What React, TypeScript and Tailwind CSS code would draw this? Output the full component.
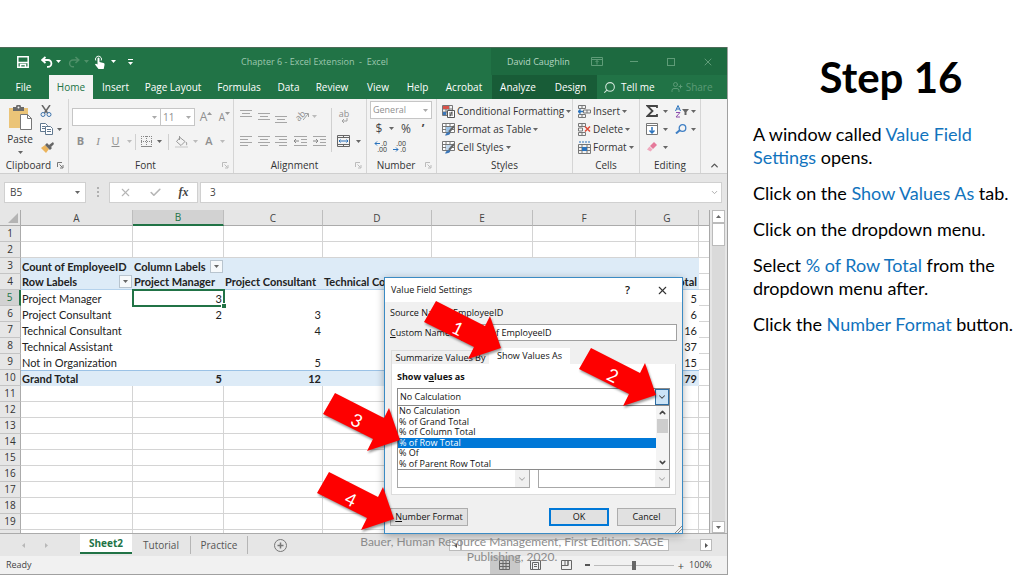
import React from "react";
import { Search, UserPlus, ChevronDown, ChevronUp, X, Check } from "lucide-react";

const tabs = [
  { label: "File", className: "w-[47px] text-white" },
  { label: "Home", className: "ml-[2px] w-[44px] bg-[#f3f3f3] text-[#217346]" },
  { label: "Insert", className: "w-[45px] text-white" },
  { label: "Page Layout", className: "w-[70px] text-white" },
  { label: "Formulas", className: "w-[62px] text-white" },
  { label: "Data", className: "w-[37px] text-white" },
  { label: "Review", className: "w-[50px] text-white" },
  { label: "View", className: "w-[42px] text-white" },
  { label: "Help", className: "w-[37px] text-white" },
  { label: "Acrobat", className: "w-[56px] text-white" },
  { label: "Analyze", className: "w-[52px] bg-[#185c37] text-white" },
  { label: "Design", className: "w-[53px] bg-[#185c37] text-white" },
];

const columns = ["A", "B", "C", "D", "E", "F", "G"];

const pivotRows: Record<number, string[]> = {
  3: ["Count of EmployeeID", "Column Labels", "", "", "", "", ""],
  4: [
    "Row Labels",
    "Project Manager",
    "Project Consultant",
    "Technical Consultant",
    "Technical Assistant",
    "Not in Organization",
    "Grand Total",
  ],
  5: ["Project Manager", "3", "", "", "", "", "5"],
  6: ["Project Consultant", "2", "3", "", "", "", "6"],
  7: ["Technical Consultant", "", "4", "", "", "", "16"],
  8: ["Technical Assistant", "", "", "", "", "", "37"],
  9: ["Not in Organization", "", "5", "", "", "", "15"],
  10: ["Grand Total", "5", "12", "", "", "", "79"],
};

const calculations = [
  "No Calculation",
  "% of Grand Total",
  "% of Column Total",
  "% of Row Total",
  "% Of",
  "% of Parent Row Total",
];

const Caret: React.FC<{ className?: string }> = ({ className = "text-[#666]" }) => (
  <svg className={`shrink-0 ${className}`} width="5" height="3" viewBox="0 0 5 3" aria-hidden="true">
    <path d="M0 0h5L2.500 3z" fill="currentColor" />
  </svg>
);

const Launcher: React.FC<{ className?: string }> = ({ className = "text-[#777]" }) => (
  <svg className={className} width="7" height="7" viewBox="0 0 7 7" fill="none" stroke="currentColor" aria-hidden="true">
    <path d="M.5 5V.5H5M2.500 2.500l3 3M6 3v3H3" />
  </svg>
);

const Group: React.FC<{ label: string; className: string; launcher?: string; children: React.ReactNode }> = ({
  label,
  className,
  launcher,
  children,
}) => (
  <section className={`flex shrink-0 flex-col pt-[2px] ${className}`}>
    <div className="flex-1">{children}</div>
    <div className="flex h-[15px] items-center text-[10px] text-[#333]">
      <span className="flex-1 text-center">{label}</span>
      {launcher && (
        <button aria-label={`${label} settings`} className="mr-[4px]">
          <Launcher className={launcher} />
        </button>
      )}
    </div>
  </section>
);

const Tool: React.FC<{ label: string; className: string; children: React.ReactNode }> = ({
  label,
  className,
  children,
}) => (
  <button aria-label={label} className={`flex shrink-0 items-center justify-center ${className}`}>
    {children}
  </button>
);

const Lines: React.FC<{ widths: number[]; align?: "left" | "center" | "right" }> = ({ widths, align = "center" }) => (
  <svg width="12" height="12" viewBox="0 0 12 12" stroke="#a6a6a6" aria-hidden="true">
    {widths.map((w, i) => {
      const x = align === "left" ? 0 : align === "right" ? 12 - w : (12 - w) / 2;
      return <path key={i} d={`M${x} ${i * 3 + 1.5}h${w}`} />;
    })}
  </svg>
);

const IndentIcon: React.FC<{ flip?: boolean }> = ({ flip }) => (
  <svg width="13" height="12" viewBox="0 0 13 12" fill="none" stroke="#a6a6a6" aria-hidden="true">
    <path d="M0 1.500h13M7 4.500h6M7 7.500h6M0 10.500h13" />
    <path d={flip ? "M0 6h5M3 4l2 2-2 2" : "M5 6H0M2 4L0 6l2 2"} stroke="#888" />
  </svg>
);

const GridIcon: React.FC<{ kind: "conditional" | "table" | "styles" | "insert" | "delete" | "format" }> = ({ kind }) => (
  <svg width="13" height="13" viewBox="0 0 13 13" fill="none" aria-hidden="true">
    {kind === "conditional" && (
      <>
        <path d="M.5.5h10v10H.5zM.5 4h10M.5 7h10M4 .5v10M7 .5v10" stroke="#777" />
        <path d="M1 1h6v3H1z" fill="#d9534a" />
        <path d="M1 7h3v3H1z" fill="#3b76b8" />
        <path d="M5.500 5.500h7v7h-7z" fill="#fff" stroke="#555" />
        <path d="M7 8h4M7 10h4M10 6.500l-2 5" stroke="#555" />
      </>
    )}
    {(kind === "table" || kind === "styles") && (
      <>
        <path d="M.5.5h12v9H.5zM.5 3.500h12M.5 6.500h12M4 .5v9M8 .5v9" fill="#fff" stroke="#777" />
        <path d="M4 4h5v5H4z" fill={kind === "table" ? "#9cc3e6" : "#c3d9ee"} />
        <path d="M12 3L7 9" stroke="#666" strokeWidth="2" />
        <path d="M3 12.500c1-3 3-4 5-3 1 2-2 3-5 3z" fill="#3b76b8" />
      </>
    )}
    {(kind === "insert" || kind === "delete") && (
      <>
        <path d="M.5.5h7v3h-7zM4 .5v3M.5 9.500h7v3h-7zM4 9.500v3" stroke="#777" />
        {kind === "insert" ? (
          <>
            <path d="M5.500 5h7v3h-7zM9 5v3" stroke="#777" />
            <path d="M5 6.500H0M2.500 4.500l-2 2 2 2" stroke="#2b73bd" strokeWidth="1.500" />
          </>
        ) : (
          <>
            <path d="M.5 5h4v3h-4z" stroke="#777" />
            <path d="M7 3.500l5 5M12 3.500l-5 5" stroke="#dd4b39" strokeWidth="1.500" />
          </>
        )}
      </>
    )}
    {kind === "format" && (
      <>
        <path d="M.5 3.500h12v9H.5zM.5 6.500h12M.5 9.500h12M4 3.500v9M9 3.500v9" stroke="#777" />
        <path d="M4 6h5v4H4z" fill="#2b73bd" />
        <path d="M1 1h11" stroke="#2b73bd" strokeDasharray="2 1" />
      </>
    )}
  </svg>
);

const TitleBar: React.FC = () => (
  <header className="flex h-[28px] shrink-0 items-center border-t border-[#4c6b58] bg-[#217346] text-[9px] text-[#9cc7ae]">
    <div className="flex flex-1 items-center pl-[17px] text-white">
      <button aria-label="Save" className="mr-[12px]">
        <svg width="12" height="12" viewBox="0 0 12 12" fill="none" stroke="currentColor" strokeWidth="1.500">
          <path d="M.8.8h10.400v10.400H.8zM.8 6.500h10.400M3.500 11V8.500h5V11" />
        </svg>
      </button>
      <button aria-label="Undo" className="mr-[3px]">
        <svg width="12" height="12" viewBox="0 0 12 12" fill="none" stroke="currentColor" strokeWidth="1.800">
          <path d="M4.500 1L1.200 4l3.300 3M1.500 4H7a3.300 3.300 0 010 6.800H6" />
        </svg>
      </button>
      <Caret className="mr-[7px] text-white" />
      <button aria-label="Redo" className="mr-[4px] text-[#4f9069]">
        <svg width="12" height="12" viewBox="0 0 12 12" fill="none" stroke="currentColor" strokeWidth="1.500">
          <path d="M7.500 1l3.300 3-3.300 3M10.500 4H5a3.300 3.300 0 000 6.800h1" />
        </svg>
      </button>
      <Caret className="mr-[5px] text-[#4f9069]" />
      <button aria-label="Touch mode" className="mr-[6px]">
        <svg width="11" height="14" viewBox="0 0 11 14" fill="currentColor">
          <path d="M3.500 3.500a1 1 0 012 0V7l4 1c1 .3 1.200 1 1 2l-.8 4H4.500L1 9.500c.5-1 1.500-.8 2.500 0z" />
          <path d="M1.800 5.500a3 3 0 115.400 0" fill="none" stroke="currentColor" />
        </svg>
      </button>
      <Caret className="mr-[12px] text-white" />
      <button aria-label="Customize toolbar" className="flex flex-col gap-[2px]">
        <span className="h-px w-[5px] bg-white" />
        <Caret className="text-white" />
      </button>
    </div>
    <h1 className="whitespace-nowrap">Chapter 6 - Excel Extension&nbsp; -&nbsp; Excel</h1>
    <div className="ml-[103px] flex h-full w-[236px] items-center bg-[#1d6a40] pl-[16px]">
      <span className="w-[84px] whitespace-nowrap text-[#b5d6c2]">David Caughlin</span>
      <button aria-label="Ribbon display" className="mr-[27px] text-[#5f9c78]">
        <svg width="12" height="9" viewBox="0 0 12 9" fill="none" stroke="currentColor">
          <path d="M.5.5h11v8H.5zM.5 2.500h11M6 7.500v-4M4.500 5L6 3.500 7.500 5" />
        </svg>
      </button>
      <button aria-label="Minimize" className="mr-[29px] h-px w-[8px] bg-[#5f9c78]" />
      <button aria-label="Maximize" className="mr-[27px] size-[8px] border border-[#5f9c78]" />
      <button aria-label="Close">
        <X size={12} strokeWidth={2} className="text-[#5f9c78]" />
      </button>
    </div>
  </header>
);

const TabRow: React.FC = () => (
  <nav className="flex h-[24px] shrink-0 bg-[#217346] text-[10px]">
    {tabs.map((tab) => (
      <button key={tab.label} className={`shrink-0 whitespace-nowrap text-center ${tab.className}`}>
        {tab.label}
      </button>
    ))}
    <button className="flex items-center gap-[5px] whitespace-nowrap pl-[6px] text-white">
      <Search size={13} strokeWidth={2} className="-scale-x-100 text-[#cfe5d8]" />
      Tell me
    </button>
    <button className="flex items-center gap-[3px] pl-[16px] text-[#5c9b76]">
      <UserPlus size={12} strokeWidth={2} />
      Share
    </button>
  </nav>
);

const ClipboardGroup: React.FC = () => (
  <Group label="Clipboard" launcher="text-[#777]" className="w-[69px] border-r border-[#d5d5d5]">
    <div className="flex">
      <button className="flex w-[40px] flex-col items-center pt-[4px] text-[10px] leading-[14px] text-[#333]">
        <svg width="24" height="25" viewBox="0 0 24 25" fill="none" aria-hidden="true">
          <path d="M1 3h19v20H1z" fill="#ebc478" />
          <path d="M5 2h3a2.500 2.500 0 015 0h3v4H5z" fill="#6a6a6a" />
          <circle cx="10.500" cy="2.500" r="1" fill="#f3f3f3" />
          <path d="M12.500 9.500h7l4 4v11h-11z" fill="#fff" stroke="#777" />
          <path d="M19.500 9.500v4h4" stroke="#777" />
        </svg>
        <span className="pt-[2px]">Paste</span>
        <Caret className="mt-[5px] text-[#666]" />
      </button>
      <div className="flex flex-col">
        <Tool label="Cut" className="h-[19px] w-[12px]">
          <svg width="12" height="12" viewBox="0 0 12 12" fill="none" aria-hidden="true">
            <path d="M2 0l5.500 8M10 0L4.500 8" stroke="#666" strokeWidth="1.500" />
            <circle cx="3" cy="9.500" r="2" stroke="#3f75ad" />
            <circle cx="9" cy="9.500" r="2" stroke="#3f75ad" />
          </svg>
        </Tool>
        <Tool label="Copy" className="h-[18px] w-[22px] gap-[4px] self-start">
          <svg width="13" height="12" viewBox="0 0 13 12" fill="#fff" stroke="#61788f" aria-hidden="true">
            <path d="M.5.5h5l2 2v6h-7zM2 3.500h3M2 5.500h3" />
            <path d="M5.500 3.500h5l2 2v6h-7zM7 6.500h4M7 8.500h4" />
          </svg>
          <Caret />
        </Tool>
        <Tool label="Format Painter" className="h-[18px] w-[14px]">
          <svg width="13" height="11" viewBox="0 0 13 11" aria-hidden="true">
            <path d="M0 6l4-3 4 4-3 4z" fill="#ebb45c" />
            <path d="M4 3l2-2 5 5-2 2zM8 3l4-3 1 2-3 3z" fill="#666" />
          </svg>
        </Tool>
      </div>
    </div>
  </Group>
);

const FontGroup: React.FC = () => (
  <Group label="Font" launcher="text-[#bbb]" className="w-[165px] border-r border-[#d5d5d5]">
    <div className="flex items-center pl-[3px] pt-[7px] text-[#8f8f8f]">
      <label className="flex h-[18px] w-[89px] items-center border border-[#c6c6c6] bg-white pr-[3px]">
        <select aria-label="Font name" className="min-w-0 flex-1 appearance-none text-[10px]">
          <option> </option>
        </select>
        <Caret className="text-[#aaa]" />
      </label>
      <label className="flex h-[18px] w-[34px] items-center border border-l-0 border-[#c6c6c6] bg-white pl-[2px] pr-[3px]">
        <select aria-label="Font size" className="min-w-0 flex-1 appearance-none text-[10px]">
          <option>11</option>
        </select>
        <Caret className="text-[#aaa]" />
      </label>
      <Tool label="Increase font size" className="w-[22px] text-[12px] leading-4">
        A<Caret className="mb-[8px] rotate-180 text-[#999]" />
      </Tool>
      <Tool label="Decrease font size" className="w-[15px] text-[10px] leading-4">
        A<Caret className="mb-[8px] text-[#999]" />
      </Tool>
    </div>
    <div className="flex h-[31px] items-center pl-[3px] text-[11px] text-[#8f8f8f]">
      <Tool label="Bold" className="w-[17px] font-bold">B</Tool>
      <Tool label="Italic" className="w-[18px] font-['Liberation_Serif',serif] italic">I</Tool>
      <Tool label="Underline" className="w-[17px] underline">U</Tool>
      <Caret className="mx-[3px] text-[#bbb]" />
      <span className="h-[16px] w-px bg-[#d0d0d0]" />
      <Tool label="Borders" className="w-[21px]">
        <svg width="11" height="11" viewBox="0 0 11 11" stroke="#888" strokeDasharray="1 1" aria-hidden="true">
          <path d="M0 .5h11M0 5.500h11M.5 0v11M5.500 0v11M10.500 0v11" />
          <path d="M0 10.500h11" strokeDasharray="none" />
        </svg>
      </Tool>
      <Caret className="mr-[6px] text-[#666]" />
      <span className="h-[16px] w-px bg-[#d0d0d0]" />
      <Tool label="Fill color" className="w-[24px]">
        <svg width="13" height="12" viewBox="0 0 13 12" fill="none" stroke="#999" aria-hidden="true">
          <path d="M5 1.500l5 4-4 4-4.500-4zM4.500 4V0M11 6c1 1.500 1 3 0 3" />
          <path d="M0 11h13" stroke="#ddd" strokeWidth="2" />
        </svg>
      </Tool>
      <Caret className="text-[#bbb]" />
      <Tool label="Font color" className="w-[22px] font-semibold">A</Tool>
      <Caret className="text-[#bbb]" />
    </div>
  </Group>
);

const AlignmentGroup: React.FC = () => (
  <Group label="Alignment" launcher="text-[#bbb]" className="w-[133px] border-r border-[#d5d5d5]">
    <div className="flex">
      <div className="flex w-[97px] flex-col pl-[3px]">
        <div className="flex h-[30px] items-center">
          <Tool label="Top align" className="w-[18px] pb-[3px]"><Lines widths={[12, 8, 12]} /></Tool>
          <Tool label="Middle align" className="w-[17px] pt-[3px]"><Lines widths={[12, 8, 12]} /></Tool>
          <Tool label="Bottom align" className="w-[18px] pt-[9px]"><Lines widths={[12, 8, 12]} /></Tool>
          <Tool label="Orientation" className="w-[32px] gap-[3px] text-[9px] text-[#8f8f8f]">
            <span className="-rotate-45 leading-[10px]">ab</span>
            <svg width="6" height="10" viewBox="0 0 6 10" fill="none" stroke="#a0a0a0" className="-ml-[6px]" aria-hidden="true">
              <path d="M0 9l5-6M2 2.500h3.500V6" />
            </svg>
            <Caret className="text-[#bbb]" />
          </Tool>
        </div>
        <div className="flex h-[20px] items-center">
          <Tool label="Align left" className="w-[18px]"><Lines widths={[12, 8, 12, 8]} align="left" /></Tool>
          <Tool label="Center" className="w-[17px]"><Lines widths={[12, 8, 12, 8]} /></Tool>
          <Tool label="Align right" className="w-[18px]"><Lines widths={[12, 8, 12, 8]} align="right" /></Tool>
          <Tool label="Decrease indent" className="w-[20px]"><IndentIcon /></Tool>
          <Tool label="Increase indent" className="w-[18px]"><IndentIcon flip /></Tool>
        </div>
      </div>
      <span className="mt-[7px] h-[44px] w-px bg-[#d0d0d0]" />
      <div className="flex flex-col pl-[5px]">
        <Tool label="Wrap text" className="h-[30px] w-[14px] flex-col text-[9px] leading-[9px] text-[#8f8f8f]">
          ab
          <svg width="8" height="5" viewBox="0 0 8 5" fill="none" stroke="#a0a0a0">
            <path d="M7 0v3H2M4 1L2 3l2 2" />
          </svg>
        </Tool>
        <Tool label="Merge and center" className="h-[20px] w-[24px] gap-[6px]">
          <svg width="13" height="12" viewBox="0 0 13 12" fill="none" stroke="#666" aria-hidden="true">
            <path d="M.5.5h12v11H.5zM.5 2.500h12M.5 9.500h12M6.500.5v2M6.500 9.500v2" />
            <path d="M2 6h9M3.500 4.500L2 6l1.500 1.500M9.500 4.500L11 6 9.500 7.500" stroke="#2b73bd" />
          </svg>
          <Caret />
        </Tool>
      </div>
    </div>
  </Group>
);

const NumberGroup: React.FC = () => (
  <Group label="Number" launcher="text-[#bbb]" className="w-[70px] border-r border-[#d5d5d5]">
    <label className="ml-[3px] flex h-[18px] w-[62px] items-center border border-[#c6c6c6] bg-white pl-[2px] pr-[3px] text-[#8f8f8f]">
      <select aria-label="Number format" className="min-w-0 flex-1 appearance-none text-[9px]">
        <option>General</option>
      </select>
      <Caret className="text-[#aaa]" />
    </label>
    <div className="flex h-[19px] items-center pl-[4px] text-[12px] text-[#444]">
      <Tool label="Currency" className="w-[16px]">$</Tool>
      <Caret className="mx-[2px] text-[#666]" />
      <Tool label="Percent" className="w-[20px]">%</Tool>
      <Tool label="Comma" className="w-[14px] font-bold">’</Tool>
    </div>
    <div className="flex h-[17px] items-center gap-[3px] pl-[4px] text-[7px] leading-[6px] text-[#333]">
      <button aria-label="Increase decimal" className="flex w-[16px] flex-col items-end">
        <span className="flex items-center gap-px">
          <svg width="6" height="5" viewBox="0 0 6 5" fill="none" stroke="#2b73bd"><path d="M6 2.500H1M3 .5l-2 2 2 2" /></svg>
          .0
        </span>
        <span>.00</span>
      </button>
      <button aria-label="Decrease decimal" className="flex w-[16px] flex-col items-end">
        <span>.00</span>
        <span className="flex items-center gap-px">
          <svg width="6" height="5" viewBox="0 0 6 5" fill="none" stroke="#2b73bd"><path d="M0 2.500h5M3 .5l2 2-2 2" /></svg>
          .0
        </span>
      </button>
    </div>
  </Group>
);

const IconRow: React.FC<{ kind: React.ComponentProps<typeof GridIcon>["kind"]; label: string }> = ({ kind, label }) => (
  <button className="flex h-[18px] items-center gap-[2px] whitespace-nowrap text-[10px] text-[#333]">
    <GridIcon kind={kind} />
    {label}
    <Caret />
  </button>
);

const Ribbon: React.FC = () => (
  <div className="flex h-[75px] shrink-0 border-b border-[#cfcfcf] bg-[#f3f3f3]">
    <ClipboardGroup />
    <FontGroup />
    <AlignmentGroup />
    <NumberGroup />
    <Group label="Styles" className="w-[136px] border-r border-[#d5d5d5]">
      <div className="flex flex-col items-start pl-[5px] pt-px">
        <IconRow kind="conditional" label="Conditional Formatting" />
        <IconRow kind="table" label="Format as Table" />
        <IconRow kind="styles" label="Cell Styles" />
      </div>
    </Group>
    <Group label="Cells" className="w-[67px] border-r border-[#d5d5d5]">
      <div className="flex flex-col items-start pl-[5px] pt-px">
        <IconRow kind="insert" label="Insert" />
        <IconRow kind="delete" label="Delete" />
        <IconRow kind="format" label="Format" />
      </div>
    </Group>
    <Group label="Editing" className="w-[61px] border-r border-[#d5d5d5]">
      <div className="grid grid-cols-2 pl-[3px] pt-px">
        <Tool label="AutoSum" className="h-[18px] gap-[5px]">
          <svg width="12" height="12" viewBox="0 0 12 12" fill="none" stroke="#444" strokeWidth="1.800">
            <path d="M11 3V1H1.500L6.500 6l-5 5H11V9" />
          </svg>
          <Caret />
        </Tool>
        <Tool label="Sort and filter" className="h-[18px] gap-[2px]">
          <svg width="14" height="13" viewBox="0 0 14 13" fill="none">
            <path d="M.5 6L3 .5 5.500 6M1.500 4h3" stroke="#2b73bd" />
            <path d="M1 7.500h4L1 12h4" stroke="#8e4fae" />
            <path d="M7 4h7l-2.500 3v3h-2V7z" fill="#666" />
          </svg>
          <Caret />
        </Tool>
        <Tool label="Fill" className="h-[18px] gap-[5px]">
          <svg width="12" height="12" viewBox="0 0 12 12" fill="#fff" stroke="#777">
            <path d="M.5.5h11v11H.5zM.5 2.500h11" />
            <path d="M6 4v6M3.500 7.500L6 10l2.500-2.500" stroke="#2b73bd" strokeWidth="1.500" fill="none" />
          </svg>
          <Caret />
        </Tool>
        <Tool label="Find and select" className="h-[18px] gap-[4px]">
          <svg width="12" height="10" viewBox="0 0 12 10" fill="none" stroke="#3f7fc4">
            <circle cx="7.500" cy="4" r="3.300" strokeWidth="1.300" />
            <path d="M5 6L1 9.500" strokeWidth="2" />
          </svg>
          <Caret />
        </Tool>
        <Tool label="Clear" className="h-[18px] gap-[5px]">
          <svg width="12" height="10" viewBox="0 0 12 10">
            <path d="M4 4l4-4 3 3-4 4z" fill="#e5799a" />
            <path d="M3.500 4.500l3 3L4.500 9.500l-3.500-2z" fill="#f0a9be" />
          </svg>
          <Caret />
        </Tool>
      </div>
    </Group>
    <button aria-label="Collapse ribbon" className="flex flex-1 items-end justify-center pb-[2px]">
      <ChevronUp size={11} strokeWidth={3} className="text-[#555]" />
    </button>
  </div>
);

const FormulaBar: React.FC = () => (
  <div className="flex h-[36px] shrink-0 items-center bg-[#e6e6e6] pl-[4px] pr-[5px] text-[10px] text-[#444]">
    <label className="flex h-[21px] w-[82px] items-center border border-[#d0d0d0] bg-white pl-[5px] pr-[5px]">
      <input aria-label="Name box" defaultValue="B5" className="min-w-0 flex-1 bg-transparent" />
      <Caret />
    </label>
    <div className="flex w-[23px] flex-col items-center gap-[2px]">
      <span className="size-[2px] bg-[#b0b0b0]" />
      <span className="size-[2px] bg-[#b0b0b0]" />
      <span className="size-[2px] bg-[#b0b0b0]" />
    </div>
    <div className="flex h-[21px] w-[89px] items-center justify-around border border-[#d0d0d0] bg-white">
      <button aria-label="Cancel entry"><X size={13} className="text-[#b5b5b5]" /></button>
      <button aria-label="Confirm entry"><Check size={13} strokeWidth={3} className="text-[#b5b5b5]" /></button>
      <button aria-label="Insert function" className="font-['Liberation_Serif',serif] text-[12px] font-bold italic">fx</button>
    </div>
    <label className="ml-[2px] flex h-[21px] flex-1 items-center border border-[#d0d0d0] bg-white pl-[9px] pr-[2px]">
      <input aria-label="Formula" defaultValue="3" className="min-w-0 flex-1 bg-transparent" />
      <ChevronDown size={9} strokeWidth={2.500} className="text-[#aaa]" />
    </label>
  </div>
);

const FilterButton: React.FC<{ label: string }> = ({ label }) => (
  <button
    aria-label={label}
    className="mr-px flex h-[13px] w-[13px] shrink-0 items-center justify-center border border-[#b8c4ce] bg-[#f6f9fb]"
  >
    <Caret />
  </button>
);

function cellClass(row: number) {
  if (row === 3) return "bg-[#ddebf7] font-bold";
  if (row === 4) return "bg-[#ddebf7] font-bold border-b border-[#b5d2ec]";
  if (row === 10) return "bg-[#ddebf7] font-bold border-t border-[#9bc2e6]";
  if (row > 4 && row < 10) return "bg-white";
  return "border-b border-r border-[#d4d4d4] bg-white";
}

const SheetCell: React.FC<{ row: number; col: number }> = ({ row, col }) => {
  const value = pivotRows[row]?.[col] ?? "";
  const isNumber = col > 0 && row > 4;
  const selected = row === 5 && col === 1;
  return (
    <td className={`whitespace-nowrap p-0 ${cellClass(row)} ${selected ? "relative" : "overflow-hidden"}`}>
      <div
        className={`flex h-[15px] items-center pl-px leading-[15px] ${
          isNumber || (row === 4 && col === 6) ? "justify-end pr-[2px]" : "justify-between"
        }`}
      >
        {value}
        {row === 4 && col === 0 && <FilterButton label="Filter row labels" />}
        {row === 3 && col === 1 && <FilterButton label="Filter column labels" />}
      </div>
      {selected && (
        <span className="pointer-events-none absolute -inset-px border-2 border-[#217346]">
          <span className="absolute -bottom-[3px] -right-[3px] size-[5px] border-l border-t border-white bg-[#217346]" />
        </span>
      )}
    </td>
  );
};

const Sheet: React.FC = () => (
  <div className="flex h-[323px] shrink-0 bg-[#e6e6e6]">
    <div className="min-w-0 flex-1 overflow-hidden border-r border-[#a8a8a8]">
      <table className="w-full table-fixed border-separate border-spacing-0 font-['Lato',sans-serif] text-[11px] text-[#222]">
        <colgroup>
          <col className="w-[21px]" />
          <col className="w-[112px]" />
          <col className="w-[91px]" />
          <col className="w-[99px]" />
          <col className="w-[109px]" />
          <col className="w-[101px]" />
          <col className="w-[103px]" />
          <col className="w-[63px]" />
          <col />
        </colgroup>
        <thead>
          <tr className="h-[16px] font-['Open_Sans',sans-serif] text-[10px] text-[#444]">
            <th className="border-b border-r border-[#ababab] p-0">
              <svg className="ml-auto mr-[2px]" width="10" height="10" viewBox="0 0 10 10" aria-hidden="true">
                <path d="M10 0v10H0z" fill="#b4b4b4" />
              </svg>
            </th>
            {columns.map((c) => (
              <th
                key={c}
                scope="col"
                className={`border-r p-0 font-normal leading-[14px] ${
                  c === "B"
                    ? "border-b-2 border-b-[#217346] border-r-[#bdbdbd] bg-[#d2d2d2] text-[#217346]"
                    : "border-b border-b-[#ababab] border-r-[#bdbdbd]"
                }`}
              >
                {c}
              </th>
            ))}
            <th className="border-b border-[#ababab] p-0" />
          </tr>
        </thead>
        <tbody>
          {Array.from({ length: 20 }, (_, i) => i + 1).map((row) => (
            <tr key={row} className="h-[16px]">
              <th
                scope="row"
                className={`border-b border-b-[#c4c4c4] p-0 font-['Open_Sans',sans-serif] text-[10px] font-normal leading-[15px] ${
                  row === 5
                    ? "border-r-2 border-r-[#217346] bg-[#d2d2d2] text-[#217346]"
                    : "border-r border-r-[#ababab] text-[#333]"
                }`}
              >
                {row < 20 ? row : ""}
              </th>
              {columns.map((c, col) => (
                <SheetCell key={c} row={row} col={col} />
              ))}
              <td className="border-b border-[#d4d4d4] bg-white p-0" />
            </tr>
          ))}
        </tbody>
      </table>
    </div>
    <div className="mx-[2px] flex w-[13px] flex-col bg-[#dadada]">
      <button aria-label="Scroll up" className="flex h-[13px] items-center justify-center border border-[#bbb] bg-white">
        <Caret className="rotate-180 text-[#666]" />
      </button>
      <span className="h-[23px] border border-[#bbb] bg-white" />
      <button aria-label="Scroll down" className="mt-auto flex h-[12px] items-center justify-center border border-[#bbb] bg-white">
        <Caret />
      </button>
    </div>
  </div>
);

const SheetTabs: React.FC = () => (
  <div className="flex h-[23px] shrink-0 border-t border-[#ababab] bg-[#e6e6e6] text-[10px] text-[#555]">
    <div className="flex w-[80px] items-center gap-[18px] pl-[21px]">
      <Caret className="rotate-90 text-[#b8b8b8]" />
      <Caret className="-rotate-90 text-[#b8b8b8]" />
    </div>
    <button className="h-[20px] w-[52px] border-b-2 border-[#217346] bg-white font-bold text-[#217346]">Sheet2</button>
    <button className="my-[2px] w-[59px] border-r border-[#b5b5b5]">Tutorial</button>
    <button className="my-[2px] w-[57px] border-r border-[#b5b5b5]">Practice</button>
    <button aria-label="New sheet" className="ml-[26px] flex items-center">
      <svg width="13" height="13" viewBox="0 0 13 13" fill="none" stroke="#777">
        <circle cx="6.500" cy="6.500" r="6" />
        <path d="M6.500 3.500v6M3.500 6.500h6" strokeWidth="1.500" />
      </svg>
    </button>
    <div className="ml-auto mr-[15px] mt-[5px] flex h-[12px] w-[263px] bg-[#dfdfdf]">
      <button aria-label="Scroll left" className="flex w-[12px] items-center justify-center border border-[#bbb] bg-white">
        <Caret className="rotate-90 text-[#555]" />
      </button>
      <span className="w-[208px] border border-[#bbb] bg-white" />
      <button aria-label="Scroll right" className="ml-auto flex w-[12px] items-center justify-center border border-[#bbb] bg-white">
        <Caret className="-rotate-90 text-[#555]" />
      </button>
    </div>
  </div>
);

const StatusBar: React.FC = () => (
  <footer className="flex h-[19px] shrink-0 items-center border-b border-[#a0a0a0] bg-[#f1f1f1] pl-[6px] pr-[15px] text-[9px] text-[#444]">
    <span className="flex-1">Ready</span>
    <button aria-label="Normal view" className="flex h-full w-[30px] items-center justify-center bg-[#c9c9c9]">
      <svg width="11" height="10" viewBox="0 0 11 10" fill="none" stroke="#666">
        <path d="M.5.5h10v9H.5zM.5 3.500h10M.5 6.500h10M4 .5v9M7 .5v9" />
      </svg>
    </button>
    <button aria-label="Page layout view" className="flex w-[31px] justify-center">
      <svg width="11" height="10" viewBox="0 0 11 10" fill="none" stroke="#666">
        <path d="M.5.5h10v9H.5zM2.500 2.500h6v7h-6zM4 4.500h3M4 6.500h3" />
      </svg>
    </button>
    <button aria-label="Page break view" className="flex w-[31px] justify-center">
      <svg width="11" height="10" viewBox="0 0 11 10" fill="none" stroke="#666">
        <path d="M.5.5h10v9H.5zM4 .5v5h3v-5M.5 5.500H4M7 .5v5" />
      </svg>
    </button>
    <button aria-label="Zoom out" className="ml-[3px] h-[2px] w-[5px] bg-[#555]" />
    <input
      type="range"
      aria-label="Zoom"
      defaultValue={50}
      className="mx-[4px] h-[10px] w-[80px] appearance-none bg-[linear-gradient(#bbb,#bbb)] bg-[length:100%_1px] bg-center bg-no-repeat [&::-webkit-slider-thumb]:h-[9px] [&::-webkit-slider-thumb]:w-[4px] [&::-webkit-slider-thumb]:appearance-none [&::-webkit-slider-thumb]:bg-[#666]"
    />
    <button aria-label="Zoom in" className="text-[11px] leading-none">+</button>
    <span className="w-[28px] text-right">100%</span>
  </footer>
);

const DialogSelect: React.FC<{ label: string; value: string; className: string; arrow: string }> = ({
  label,
  value,
  className,
  arrow,
}) => (
  <label className={`flex h-[18px] items-stretch border bg-white ${className}`}>
    <select aria-label={label} className="min-w-0 flex-1 appearance-none pl-[2px]">
      <option>{value}</option>
    </select>
    <span className={`flex w-[14px] items-center justify-center ${arrow}`}>
      <ChevronDown size={10} strokeWidth={2.500} />
    </span>
  </label>
);

const ValueFieldDialog: React.FC = () => (
  <div
    role="dialog"
    aria-label="Value Field Settings"
    className="absolute left-[384px] top-[230px] flex w-[299px] flex-col border border-[#3b8bc4] bg-[#f0f0f0] text-[9px] leading-[12px] text-[#111] shadow-[0_2px_8px_rgba(0,0,0,0.3)]"
  >
    <div className="flex h-[24px] items-center bg-white pl-[6px] pr-[13px]">
      <h2 className="flex-1">Value Field Settings</h2>
      <button aria-label="Help" className="mr-[26px] text-[11px] font-semibold">?</button>
      <button aria-label="Close dialog">
        <X size={13} strokeWidth={2} className="text-[#333]" />
      </button>
    </div>
    <div className="flex flex-col px-[5px] pt-[5px]">
      <p className="flex">
        <span className="w-[63px]">Source Name:</span>EmployeeID
      </p>
      <label className="mt-[5px] flex h-[17px] items-center">
        <span className="w-[71px]">
          <u>C</u>ustom Name:
        </span>
        <input
          defaultValue="Count of EmployeeID"
          className="h-full min-w-0 flex-1 border border-[#a0a0a0] bg-white pl-px"
        />
      </label>
      <div role="tablist" className="mt-[7px] flex h-[16px] items-end">
        <button role="tab" className="ml-px h-[14px] w-[98px] whitespace-nowrap border-l border-t border-[#dcdcdc]">
          Summarize Values By
        </button>
        <button role="tab" aria-selected="true" className="h-full w-[81px] whitespace-nowrap bg-white">
          Show Values As
        </button>
      </div>
      <div className="mx-px border border-t-0 border-[#dcdcdc] bg-white px-[5px] pb-[6px] pt-[7px]">
        <h3 className="mb-[5px] font-bold">
          Show v<u>a</u>lues as
        </h3>
        <DialogSelect
          label="Show values as"
          value="No Calculation"
          className="border-[#8a8a8a]"
          arrow="border border-[#2d6da3] bg-[#cce4f7] text-[#444]"
        />
        <div className="flex h-[64px] border-x border-b border-[#8a8a8a] bg-white">
          <ul role="listbox" aria-label="Calculations" className="grid flex-1 grid-rows-6">
            {calculations.map((item) => (
              <li
                key={item}
                role="option"
                aria-selected={item === "% of Row Total"}
                className={`flex items-center pl-px leading-[10px] ${
                  item === "% of Row Total" ? "bg-[#0078d7] text-white" : ""
                }`}
              >
                {item}
              </li>
            ))}
          </ul>
          <div className="flex w-[13px] flex-col items-center bg-[#f4f4f4] py-[2px] text-[#444]">
            <ChevronUp size={9} strokeWidth={4} />
            <span className="mt-[2px] h-[14px] w-[11px] bg-[#cdcdcd]" />
            <ChevronDown size={9} strokeWidth={4} className="mt-auto" />
          </div>
        </div>
        <div className="flex gap-[8px]">
          <DialogSelect label="Base field" value="" className="flex-1 border-t-0 border-[#a8a8a8]" arrow="bg-[#f0f0f0] text-[#aaa]" />
          <DialogSelect label="Base item" value="" className="flex-1 border-t-0 border-[#a8a8a8]" arrow="bg-[#f0f0f0] text-[#aaa]" />
        </div>
      </div>
      <div className="flex items-center gap-[8px] pb-[7px] pr-px pt-[13px]">
        <button className="mr-auto h-[18px] w-[78px] border border-[#adadad] bg-[#e1e1e1]">
          <u>N</u>umber Format
        </button>
        <button className="h-[18px] w-[60px] border-2 border-[#0078d7] bg-[#e1e1e1]">OK</button>
        <button className="h-[18px] w-[59px] border border-[#adadad] bg-[#e1e1e1]">Cancel</button>
      </div>
    </div>
    <svg className="absolute bottom-0 right-0" width="8" height="8" viewBox="0 0 8 8" stroke="#888" aria-hidden="true">
      <path d="M1 8l7-7M4 8l4-4" />
    </svg>
  </div>
);

const Arrow: React.FC<{ label: string; className: string }> = ({ label, className }) => (
  <div className={`pointer-events-none absolute flex h-[58px] w-[77px] ${className}`}>
    <svg
      className="absolute inset-0 overflow-visible drop-shadow-[1px_2px_1px_rgba(0,0,0,0.4)]"
      width="77"
      height="58"
      viewBox="0 0 77 58"
      aria-hidden="true"
    >
      <path d="M12 0L61 25 66 15 77 47 44 58 50 46 0 21z" fill="#fe0000" />
    </svg>
    <span className="relative mt-[15px] h-[24px] w-[68px] rotate-[26deg] text-center font-['Lato',sans-serif] text-[18px] leading-[24px] text-white">
      {label}
    </span>
  </div>
);

const Instructions: React.FC = () => (
  <aside className="w-[296px] shrink-0 pl-[25px] pt-[51px] font-['Lato',sans-serif] text-black">
    <h2 className="mb-[20px] pl-[5px] text-center text-[42px] font-bold leading-[52px]">Step 16</h2>
    <div className="flex flex-col gap-[13px] text-[18px] leading-[23px] [&_em]:not-italic [&_em]:text-[#1173bd]">
      <p>
        A window called <em>Value Field Settings</em> opens.
      </p>
      <p className="whitespace-nowrap">
        Click on the <em>Show Values As</em> tab.
      </p>
      <p>Click on the dropdown menu.</p>
      <p>
        Select <em>% of Row Total</em> from the dropdown menu after.
      </p>
      <p className="whitespace-nowrap">
        Click the <em>Number Format</em> button.
      </p>
    </div>
  </aside>
);

const App: React.FC = () => (
  <main className="relative flex min-h-screen overflow-hidden bg-white font-['Open_Sans','Noto_Sans',sans-serif]">
    <div className="min-w-0 flex-1 pt-[47px]">
      <div className="relative flex flex-col border-r border-[#a0a0a0]">
        <TitleBar />
        <TabRow />
        <Ribbon />
        <FormulaBar />
        <Sheet />
        <SheetTabs />
        <StatusBar />
        <ValueFieldDialog />
        <Arrow label="1" className="left-[424px] top-[254px]" />
        <Arrow label="2" className="left-[579px] top-[301px]" />
        <Arrow label="3" className="left-[323px] top-[346px]" />
        <Arrow label="4" className="left-[317px] top-[425px]" />
      </div>
    </div>
    <Instructions />
    <p className="absolute inset-x-0 bottom-[12px] mx-auto w-[320px] text-center font-['Lato',sans-serif] text-[12px] leading-[15px] text-[#8b8b8b]">
      Bauer, Human Resource Management, First Edition. SAGE Publishing, 2020.
    </p>
  </main>
);

export default App;
